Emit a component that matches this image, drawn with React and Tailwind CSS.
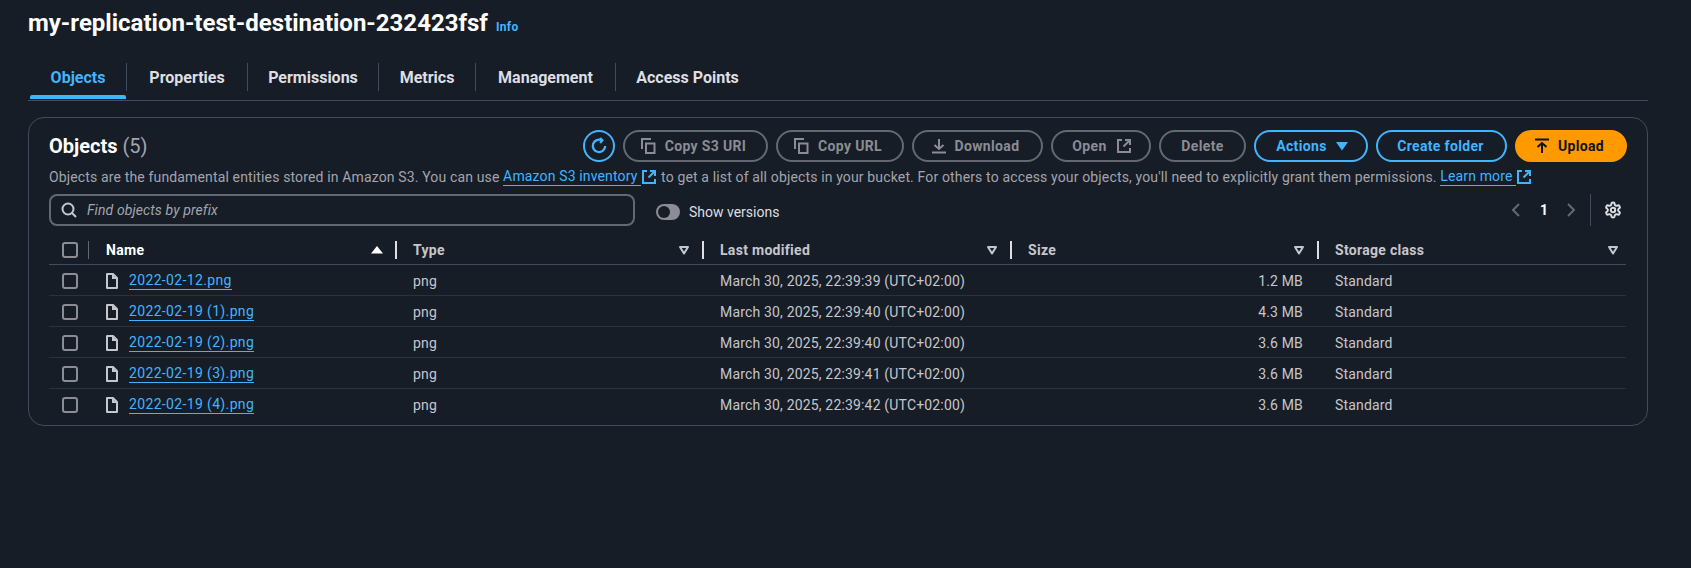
import React from "react";

const Copy = () => (
  <svg width="16" height="16" viewBox="0 0 16 16" fill="none" stroke="currentColor" strokeWidth="2" className="shrink-0">
    <path d="M6 5.5h8.5V15H6z" />
    <path d="M2 11V1h9" />
  </svg>
);
const Ext = ({ s = 16 }) => (
  <svg width={s} height={s} viewBox="0 0 16 16" fill="none" stroke="currentColor" strokeWidth="2" className="shrink-0">
    <path d="M6 2H2v12h12v-4" />
    <path d="M9 2h5v5" />
    <path d="M14 2L7.5 8.5" />
  </svg>
);
const Caret = ({ color = "#c6c6cd", up = false }) => (
  <svg width="12" height="12" viewBox="0 0 12 12" className="shrink-0">
    {up ? (
      <path d="M6 2l6 7.5H0z" fill="#fff" />
    ) : (
      <path d="M2 3h8L6 9.5z" fill="none" stroke={color} strokeWidth="2" strokeLinejoin="round" />
    )}
  </svg>
);
const FileIcon = () => (
  <svg width="16" height="16" viewBox="0 0 16 16" fill="none" stroke="#c6c6cd" strokeWidth="2" className="shrink-0">
    <path d="M3 1h6l4 4v10H3z" strokeLinejoin="round" />
    <path d="M9 1v4h4" />
  </svg>
);

function Btn({ children, variant = "disabled", cls = "" }) {
  const v = {
    disabled: "border-[#656871] text-[#8c8c94]",
    normal: "border-[#42b4ff] text-[#42b4ff]",
    primary: "border-[#ff9900] bg-[#ff9900] text-[#0f141a]",
  }[variant];
  return (
    <div className={`h-8 border-2 rounded-[20px] flex items-center justify-center text-sm font-bold tracking-[0.35px] ${v} ${cls}`}>
      {children}
    </div>
  );
}

const A = ({ children, cls = "" }) => (
  <span className={`text-[#42b4ff] border-b border-[#42b4ff] leading-[17px] inline-block ${cls}`}>{children}</span>
);

const tabs = [
  ["Objects", "w-[99px] pl-[2px]"],
  ["Properties", "w-[121px]"],
  ["Permissions", "w-[131px]"],
  ["Metrics", "w-[97px]"],
  ["Management", "w-[140px]"],
  ["Access Points", "w-[143px]"],
];
const rows = [
  ["2022-02-12.png", "March 30, 2025, 22:39:39 (UTC+02:00)", "1.2 MB"],
  ["2022-02-19 (1).png", "March 30, 2025, 22:39:40 (UTC+02:00)", "4.3 MB"],
  ["2022-02-19 (2).png", "March 30, 2025, 22:39:40 (UTC+02:00)", "3.6 MB"],
  ["2022-02-19 (3).png", "March 30, 2025, 22:39:41 (UTC+02:00)", "3.6 MB"],
  ["2022-02-19 (4).png", "March 30, 2025, 22:39:42 (UTC+02:00)", "3.6 MB"],
];
const cols = "grid grid-cols-[41px_307px_307px_308px_307px_307px]";

const Box = () => <div className="w-4 h-4 rounded-[3px] border-2 border-[#8c8c94]" />;

function Head({ label, last }) {
  return (
    <div className="flex items-center h-[18px] pl-4 pr-0">
      <span className="font-bold text-sm tracking-[0.3px] text-[#c6c6cd]">{label}</span>
      <div className={`ml-auto ${last ? "mr-[7px]" : "mr-[12px]"}`}><Caret /></div>
      {!last && <div className="w-[2px] h-[18px] bg-[#dedee3]" />}
    </div>
  );
}

export default function App() {
  return (
    <div className="min-h-[568px] bg-[#161d26] text-[#c6c6cd] text-sm font-['Roboto',sans-serif] pt-[8px] pl-[28px] w-[1691px]">
      <div className="flex items-baseline h-[30px]">
        <h1 className="text-2xl font-bold text-white leading-[30px]">my-replication-test-destination-232423fsf</h1>
        <span className="ml-2 text-xs font-bold text-[#42b4ff] tracking-[0.3px]">Info</span>
      </div>

      <div className="mt-[25px] w-[1620px] h-[38px] border-b border-[#414d5c] flex items-start">
        {tabs.map(([t, w], i) => (
          <div key={t} className={`relative h-7 flex items-center justify-center pt-[2px] ${w} ${i < 5 ? "border-r border-[#414d5c]" : ""}`}>
            <span className={`font-bold text-base ${i === 0 ? "text-[#42b4ff]" : "text-[#dedee3]"}`}>{t}</span>
            {i === 0 && <div className="absolute left-[2px] right-0 top-[32px] h-1 rounded-t-[2px] bg-[#42b4ff]" />}
          </div>
        ))}
      </div>

      <div className="mt-[16px] w-[1620px] h-[309px] border border-[#414d5c] rounded-2xl px-5 pt-3">
        <div className="flex items-center h-8">
          <div className="text-xl font-bold text-white">
            Objects <span className="font-normal text-[#a4a4ad]">(5)</span>
          </div>
          <div className="ml-auto flex items-center gap-2">
            <div className="w-8 h-8 rounded-full border-2 border-[#42b4ff] text-[#42b4ff] flex items-center justify-center">
              <svg width="18" height="18" viewBox="0 0 16 16" fill="none" stroke="currentColor" strokeWidth="2">
                <path d="M13.5 8A5.5 5.5 0 1 1 10.5 3" />
                <path d="M9 0.8L11 3l-2 2.4" strokeLinejoin="miter" />
              </svg>
            </div>
            <Btn cls="w-[145px] gap-[9px] pr-[5px]"><Copy /><span>Copy S3 URI</span></Btn>
            <Btn cls="w-[128px] gap-[9px] pr-[5px]"><Copy /><span>Copy URL</span></Btn>
            <Btn cls="w-[131px] gap-[8px] pr-[5px]">
              <svg width="16" height="16" viewBox="0 0 16 16" fill="none" stroke="currentColor" strokeWidth="2" className="shrink-0"><path d="M1 14.5h14M8 1v10M3.5 7L8 11l4.5-4" /></svg>
              <span>Download</span>
            </Btn>
            <Btn cls="w-[100px] gap-[9px] pl-[2px]"><span>Open</span><Ext /></Btn>
            <Btn cls="w-[87px]"><span>Delete</span></Btn>
            <Btn variant="normal" cls="w-[114px] gap-[8px] pl-[3px]">
              <span>Actions</span>
              <svg width="14" height="12" viewBox="0 0 14 12" className="shrink-0"><path d="M1 2h12L7 10.5z" fill="currentColor" /></svg>
            </Btn>
            <Btn variant="normal" cls="w-[131px] pr-[2px]"><span>Create folder</span></Btn>
            <Btn variant="primary" cls="w-[112px] gap-[8px] pr-[4px]">
              <svg width="16" height="16" viewBox="0 0 16 16" fill="none" stroke="currentColor" strokeWidth="2" className="shrink-0"><path d="M1 1.5h14M8 15V5M3.5 9L8 5l4.5 4" /></svg>
              <span>Upload</span>
            </Btn>
          </div>
        </div>

        <div className="mt-[5px] h-[20px] flex items-center text-[#a4a4ad] whitespace-nowrap tracking-[0.145px]">
          <span>Objects are the fundamental entities stored in Amazon S3. You can use&nbsp;</span>
          <A>Amazon S3 inventory&nbsp;</A>
          <span className="text-[#42b4ff] mr-1"><Ext /></span>
          <span>to get a list of all objects in your bucket. For others to access your objects, you'll need to explicitly grant them permissions.&nbsp;</span>
          <A>Learn more&nbsp;</A>
          <span className="text-[#42b4ff]"><Ext /></span>
        </div>

        <div className="mt-[7px] flex items-center h-8">
          <div className="w-[586px] h-8 border-2 border-[#656871] rounded-lg flex items-center pl-[10px]">
            <svg width="16" height="16" viewBox="0 0 16 16" fill="none" stroke="#c6c6cd" strokeWidth="2">
              <circle cx="7" cy="7" r="5.5" /><path d="M11 11l4 4" />
            </svg>
            <span className="ml-[10px] italic text-[#a4a4ad] tracking-[0.1px]">Find objects by prefix</span>
          </div>
          <div className="ml-[21px] w-6 h-4 mt-1 rounded-full bg-[#8c8c94] relative">
            <div className="absolute left-[2px] top-[2px] w-3 h-3 rounded-full bg-[#161d26]" />
          </div>
          <span className="ml-[9px] mt-1 text-[#dedee3]">Show versions</span>
          <div className="ml-auto flex items-center h-8">
            <svg width="16" height="16" viewBox="0 0 16 16" fill="none" stroke="#656871" strokeWidth="2"><path d="M11 2L5 8l6 6" /></svg>
            <span className="mx-[16px] font-bold text-white w-[7px] text-center">1</span>
            <svg width="16" height="16" viewBox="0 0 16 16" fill="none" stroke="#656871" strokeWidth="2"><path d="M5 2l6 6-6 6" /></svg>
            <div className="ml-[11px] w-px h-8 bg-[#414d5c]" />
            <div className="ml-[13px] mr-[5px]">
              <svg width="18" height="18" viewBox="0 0 24 24" fill="none" stroke="#dedee3" strokeWidth="2.6">
                <path d="M12.22 2h-.44a2 2 0 0 0-2 2v.18a2 2 0 0 1-1 1.73l-.43.25a2 2 0 0 1-2 0l-.15-.08a2 2 0 0 0-2.73.73l-.22.38a2 2 0 0 0 .73 2.73l.15.1a2 2 0 0 1 1 1.72v.51a2 2 0 0 1-1 1.74l-.15.09a2 2 0 0 0-.73 2.73l.22.38a2 2 0 0 0 2.73.73l.15-.08a2 2 0 0 1 2 0l.43.25a2 2 0 0 1 1 1.73V20a2 2 0 0 0 2 2h.44a2 2 0 0 0 2-2v-.18a2 2 0 0 1 1-1.73l.43-.25a2 2 0 0 1 2 0l.15.08a2 2 0 0 0 2.73-.73l.22-.39a2 2 0 0 0-.73-2.73l-.15-.08a2 2 0 0 1-1-1.74v-.5a2 2 0 0 1 1-1.74l.15-.09a2 2 0 0 0 .73-2.73l-.22-.38a2 2 0 0 0-2.73-.73l-.15.08a2 2 0 0 1-2 0l-.43-.25a2 2 0 0 1-1-1.73V4a2 2 0 0 0-2-2z" />
                <circle cx="12" cy="12" r="3" />
              </svg>
            </div>
          </div>
        </div>

        <div className={`${cols} mt-[15px] pb-[5px] border-b border-[#414d5c] w-[1577px]`}>
          <div className="flex items-center h-[18px] pl-[13px]">
            <Box />
            <div className="ml-auto mr-px w-px h-[18px] bg-[#656871]" />
          </div>
          <div className="flex items-center h-[18px] pl-4">
            <span className="font-bold text-sm tracking-[0.3px] text-white">Name</span>
            <div className="ml-auto mr-[12px]"><Caret up /></div>
            <div className="w-[2px] h-[18px] bg-[#dedee3]" />
          </div>
          <Head label="Type" />
          <Head label="Last modified" />
          <Head label="Size" />
          <Head label="Storage class" last />
        </div>

        {rows.map((r, i) => (
          <div key={r[0]} className={`${cols} w-[1577px] h-[31px] pt-[2px] items-center tracking-[0.17px] border-b ${i < 4 ? "border-[#2a323c]" : "border-transparent"}`}>
            <div className="pl-[13px]"><Box /></div>
            <div className="pl-[14px] flex items-center gap-[9px]">
              <FileIcon />
              <A cls="tracking-[0.35px]">{r[0]}</A>
            </div>
            <div className="pl-4">png</div>
            <div className="pl-4">{r[1]}</div>
            <div className="text-right pr-4">{r[2]}</div>
            <div className="pl-4">Standard</div>
          </div>
        ))}
      </div>
    </div>
  );
}
